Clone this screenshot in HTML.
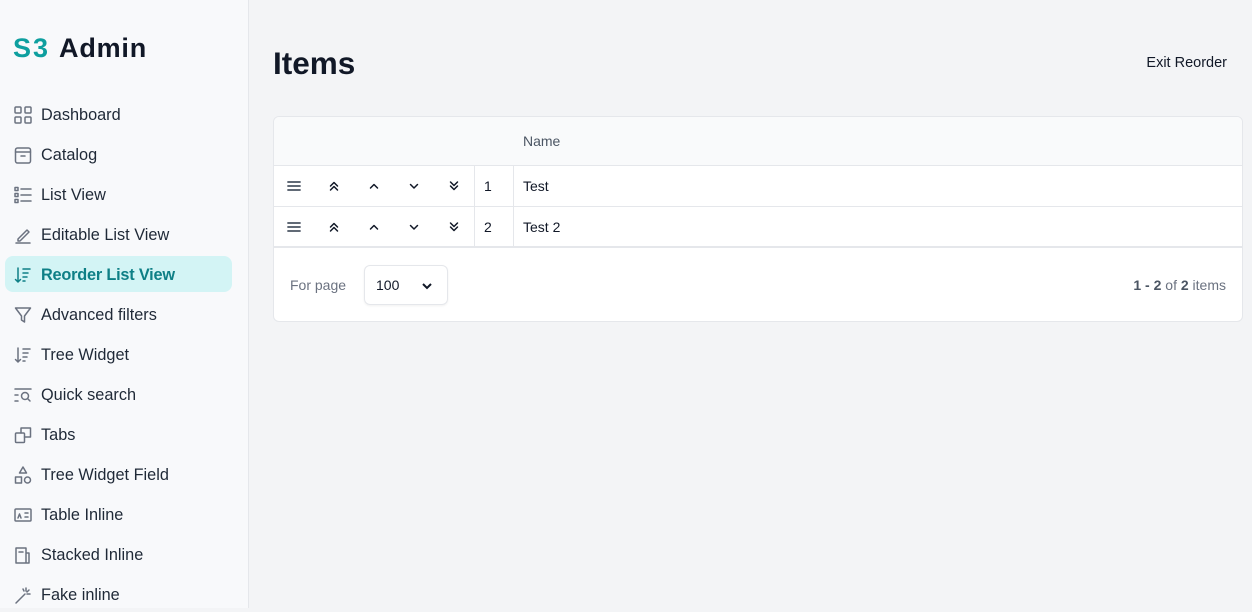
<!DOCTYPE html>
<html><head><meta charset="utf-8"><style>
*{box-sizing:border-box;margin:0;padding:0}
body{width:1252px;height:608px;overflow:hidden;background:#f3f4f6;font-family:"Liberation Sans",sans-serif;color:#111827;position:relative}
.sb{position:absolute;left:0;top:0;width:249px;height:608px;background:#f8f9fb;border-right:1px solid #e5e7eb}
.logo{position:absolute;left:13px;top:33px;font-size:27px;font-weight:bold;letter-spacing:0.8px}
.logo span{color:#0e9f9f;letter-spacing:2px;margin-right:9px}
.nav{position:absolute;left:5px;width:227px;height:36px;display:flex;align-items:center;padding-left:8px;padding-top:2px;font-size:16.3px;color:#1f2937;border-radius:8px}
.nav svg{width:20px;height:20px;margin-right:8px;stroke:#6b7280;fill:none;stroke-width:1.5;stroke-linecap:round;stroke-linejoin:round}
.nav.act{background:#d3f4f5;color:#0e7f86;font-weight:bold;letter-spacing:-0.2px}
.nav.act svg{stroke:#0e7f86}
h1{position:absolute;left:273px;top:45px;font-size:31.5px;font-weight:bold;color:#111827}
.exit{position:absolute;right:25px;top:55px;font-size:14.5px;color:#111827}
.card{position:absolute;left:273px;top:116px;width:970px;height:206px;background:#fff;border:1px solid #e5e7eb;border-radius:6px;overflow:hidden}
.hd{height:49px;background:#f9fafb;border-bottom:1px solid #e5e7eb;position:relative}
.hd span{position:absolute;left:249px;top:16px;font-size:14px;color:#4b5563}
.row{height:41px;border-bottom:1px solid #e5e7eb;position:relative;font-size:14px}
.row.l{border-bottom:2px solid #e5e7eb}
.row .n{position:absolute;left:200px;top:0;width:40px;height:100%;border-left:1px solid #e5e7eb;border-right:1px solid #e5e7eb;padding:12px 0 0 9px}
.row .t{position:absolute;left:249px;top:12px}
.row svg{position:absolute;top:13px;width:14px;height:14px;fill:none;stroke:#111827;stroke-width:1.5;stroke-linecap:round;stroke-linejoin:round}
.ft{position:relative;height:72px}
.fp{position:absolute;left:16px;top:29px;font-size:14px;color:#6b7280}
.sel{position:absolute;left:90px;top:17px;width:84px;height:40px;border:1px solid #e5e7eb;border-radius:6px;box-shadow:0 1px 2px rgba(0,0,0,.06);font-size:14px;padding:11px 0 0 11px}
.sel svg{position:absolute;right:14px;top:14px;width:12px;height:12px;fill:none;stroke:#111827;stroke-width:2}
.cnt{position:absolute;right:16px;top:29px;font-size:14px;color:#6b7280}
.cnt b{color:#4b5563}
</style></head><body>
<div class="sb">
<div class="logo"><span>S3</span>Admin</div>
<div class="nav" style="top:96px"><svg viewBox="0 0 20 20"><rect x="2" y="2" width="6" height="6" rx="1"/><rect x="12" y="2" width="6" height="6" rx="1"/><rect x="2" y="12" width="6" height="6" rx="1"/><rect x="12" y="12" width="6" height="6" rx="1"/></svg>Dashboard</div>
<div class="nav" style="top:136px"><svg viewBox="0 0 20 20"><rect x="2.5" y="3" width="15" height="15" rx="2"/><path d="M2.5 7h15M8 11h4"/></svg>Catalog</div>
<div class="nav" style="top:176px"><svg viewBox="0 0 20 20"><rect x="2" y="2.5" width="3" height="3"/><rect x="2" y="8.5" width="3" height="3"/><rect x="2" y="14.5" width="3" height="3"/><path d="M8 4h10M8 10h10M8 16h10"/></svg>List View</div>
<div class="nav" style="top:216px"><svg viewBox="0 0 20 20"><path d="M3 18h14M5 14l9-9 2 2-9 9H5z"/></svg>Editable List View</div>
<div class="nav act" style="top:256px"><svg viewBox="0 0 20 20"><path d="M5 3v14M2.5 14.5L5 17l2.5-2.5M10 4h7M10 8h5M10 12h4M10 16h2"/></svg>Reorder List View</div>
<div class="nav" style="top:296px"><svg viewBox="0 0 20 20"><path d="M2.5 3h15l-6 8v6l-3-2v-4z"/></svg>Advanced filters</div>
<div class="nav" style="top:336px"><svg viewBox="0 0 20 20"><path d="M5 3v14M2.5 14.5L5 17l2.5-2.5M10 4h7M10 8h5M10 12h4M10 16h2"/></svg>Tree Widget</div>
<div class="nav" style="top:376px"><svg viewBox="0 0 20 20"><path d="M2 4h16M2 10h3M2 16h3"/><circle cx="12" cy="11" r="3.5"/><path d="M14.5 13.5L17 16"/></svg>Quick search</div>
<div class="nav" style="top:416px"><svg viewBox="0 0 20 20"><rect x="2.5" y="8" width="9" height="9.5" rx="1"/><path d="M8 8V3h9.5v9H11.5"/></svg>Tabs</div>
<div class="nav" style="top:456px"><svg viewBox="0 0 20 20"><path d="M10 2l3.5 6h-7z"/><rect x="2.5" y="12" width="6" height="6"/><circle cx="14.5" cy="15" r="3"/></svg>Tree Widget Field</div>
<div class="nav" style="top:496px"><svg viewBox="0 0 20 20"><rect x="2" y="4" width="16" height="12" rx="1"/><path d="M5 13l1.5-4 1.5 4M12 8h3M12 12h3"/></svg>Table Inline</div>
<div class="nav" style="top:536px"><svg viewBox="0 0 20 20"><path d="M3 3h10v15H3zM13 8h3v10h-3M6 7h4"/></svg>Stacked Inline</div>
<div class="nav" style="top:576px"><svg viewBox="0 0 20 20"><path d="M3 18l9-9M13 3v3M16 5l-2 2M17 9h-3M10 4l1 2"/></svg>Fake inline</div>
</div>
<h1>Items</h1>
<div class="exit">Exit Reorder</div>
<div class="card">
<div class="hd"><span>Name</span></div>
<div class="row">
<svg style="left:13px" viewBox="0 0 14 14"><path d="M1 3h12M1 7h12M1 11h12" stroke-width="1.8" stroke="#4b5563"/></svg>
<svg style="left:53px" viewBox="0 0 14 14"><path d="M3.5 7L7 3.5 10.5 7M3.5 11L7 7.5 10.5 11"/></svg>
<svg style="left:93px" viewBox="0 0 14 14"><path d="M3.5 9L7 5.5 10.5 9"/></svg>
<svg style="left:133px" viewBox="0 0 14 14"><path d="M3.5 5.5L7 9 10.5 5.5"/></svg>
<svg style="left:173px" viewBox="0 0 14 14"><path d="M3.5 3L7 6.5 10.5 3M3.5 7L7 10.5 10.5 7"/></svg>
<div class="n">1</div><div class="t">Test</div></div>
<div class="row l">
<svg style="left:13px" viewBox="0 0 14 14"><path d="M1 3h12M1 7h12M1 11h12" stroke-width="1.8" stroke="#4b5563"/></svg>
<svg style="left:53px" viewBox="0 0 14 14"><path d="M3.5 7L7 3.5 10.5 7M3.5 11L7 7.5 10.5 11"/></svg>
<svg style="left:93px" viewBox="0 0 14 14"><path d="M3.5 9L7 5.5 10.5 9"/></svg>
<svg style="left:133px" viewBox="0 0 14 14"><path d="M3.5 5.5L7 9 10.5 5.5"/></svg>
<svg style="left:173px" viewBox="0 0 14 14"><path d="M3.5 3L7 6.5 10.5 3M3.5 7L7 10.5 10.5 7"/></svg>
<div class="n">2</div><div class="t">Test 2</div></div>
<div class="ft"><div class="fp">For page</div>
<div class="sel">100<svg viewBox="0 0 12 12"><path d="M2 4l4 4 4-4"/></svg></div>
<div class="cnt"><b>1 - 2</b> of <b>2</b> items</div></div>
</div>
</body></html>
